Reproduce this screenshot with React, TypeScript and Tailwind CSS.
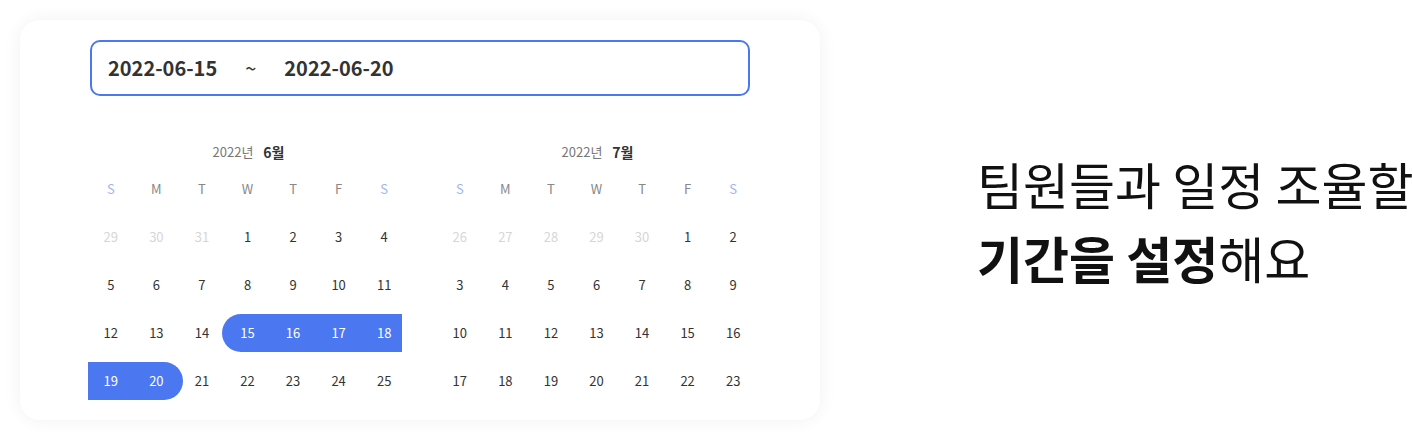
import React from 'react';

type Sel = 'start' | 'mid' | 'rowEnd' | 'end';
type Day = { label: number; muted?: boolean; sel?: Sel };

const WEEK = ['S', 'M', 'T', 'W', 'T', 'F', 'S'];

const june: Day[] = [
  { label: 29, muted: true }, { label: 30, muted: true }, { label: 31, muted: true },
  ...Array.from({ length: 25 }, (_, i) => {
    const d = i + 1;
    let sel: Sel | undefined;
    if (d === 15) sel = 'start';
    else if (d === 16 || d === 17 || d === 19) sel = 'mid';
    else if (d === 18) sel = 'rowEnd';
    else if (d === 20) sel = 'end';
    return { label: d, sel };
  }),
];

const july: Day[] = [
  { label: 26, muted: true }, { label: 27, muted: true }, { label: 28, muted: true },
  { label: 29, muted: true }, { label: 30, muted: true },
  ...Array.from({ length: 23 }, (_, i) => ({ label: i + 1 })),
];

// range bar pieces, margins nudge the bar ends to where the design puts them
const selShape: Record<Sel, string> = {
  start: 'ml-[-3px] pl-[3px] rounded-l-full',
  mid: '',
  rowEnd: 'mr-[5px] pl-[5px]',
  end: 'mr-[-4px] pr-[4px] rounded-r-full',
};

const DayCell: React.FC<{ day: Day }> = ({ day }) => {
  const base = 'h-[38px] flex items-center justify-center text-[13px]';
  if (day.sel) {
    return (
      <div className="h-[48px] flex flex-col justify-center">
        <div className={`${base} bg-[#4b78f0] text-white ${selShape[day.sel]}`}>{day.label}</div>
      </div>
    );
  }
  return (
    <div className="h-[48px] flex flex-col justify-center">
      <div className={`${base} ${day.muted ? 'text-[#d6d6d6]' : 'text-[#333]'}`}>{day.label}</div>
    </div>
  );
};

const MonthCalendar: React.FC<{ month: string; days: Day[] }> = ({ month, days }) => (
  <div className="w-[319px]">
    <div className="h-[20px] mb-[3px] flex items-center justify-center gap-[10px] pl-[2px]">
      <span className="text-[13px] text-[#777]">2022년</span>
      <span className="text-[14px] font-bold text-[#333]">{month}</span>
    </div>
    <div className="grid grid-cols-7">
      {WEEK.map((w, i) => (
        <div
          key={i}
          className={`h-[48px] flex items-center justify-center text-[13px] ${
            i === 0 || i === 6 ? 'text-[#9fb4f7]' : 'text-[#888]'
          }`}
        >
          {w}
        </div>
      ))}
      {days.map((d, i) => (
        <DayCell key={i} day={d} />
      ))}
    </div>
  </div>
);

export default function App() {
  return (
    <div
      className="w-[1412px] h-[440px] bg-white flex items-start p-[20px]"
      style={{ fontFamily: '"Noto Sans CJK KR", "Noto Sans", sans-serif' }}
    >
      <div className="w-[800px] h-[400px] shrink-0 bg-white rounded-[20px] shadow-[0_0_18px_rgba(0,0,0,0.06)] flex flex-col items-center pt-[20px]">
        <div className="w-[660px] h-[56px] border-2 border-[#4b78f0] rounded-[10px] flex items-center px-[16px] text-[20px] font-bold text-[#333]">
          <span>2022-06-15</span>
          <span className="mx-[28px] font-normal">~</span>
          <span>2022-06-20</span>
        </div>
        <div className="mt-[46px] self-start ml-[68px] flex gap-[30px]">
          <MonthCalendar month="6월" days={june} />
          <MonthCalendar month="7월" days={july} />
        </div>
      </div>
      <div className="self-center ml-[157px] text-[50px] leading-[74px] text-[#111] whitespace-nowrap">
        <div>팀원들과 일정 조율할</div>
        <div>
          <span className="font-bold">기간을 설정</span>해요
        </div>
      </div>
    </div>
  );
}
